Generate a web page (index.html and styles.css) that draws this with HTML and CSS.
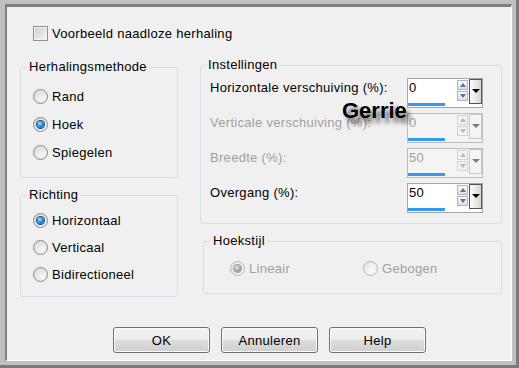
FILE: index.html
```html
<!DOCTYPE html>
<html lang="nl">
<head>
  <meta charset="UTF-8" />
  <title>Naadloze herhaling</title>
  <link rel="stylesheet" href="styles.css">
</head>
<body>
  <div class="frame">
    <div class="panel">
      <!-- Preview toggle -->
      <div class="check-row"><span class="checkbox"></span>Voorbeeld naadloze herhaling</div>

      <div class="main">
        <div class="col-left">
          <fieldset class="group group-method">
            <legend>Herhalingsmethode</legend>
            <div class="radio-row"><span class="radio"></span>Rand</div>
            <div class="radio-row"><span class="radio checked"></span>Hoek</div>
            <div class="radio-row"><span class="radio"></span>Spiegelen</div>
          </fieldset>
          <fieldset class="group group-dir">
            <legend>Richting</legend>
            <div class="radio-row"><span class="radio checked"></span>Horizontaal</div>
            <div class="radio-row"><span class="radio"></span>Verticaal</div>
            <div class="radio-row"><span class="radio"></span>Bidirectioneel</div>
          </fieldset>
        </div>

        <div class="col-right">
          <fieldset class="group group-settings">
            <legend>Instellingen</legend>
            <div class="field-row">
              <span class="field-label">Horizontale verschuiving (%):</span>
              <div class="spin">
                <div class="spin-value"><span>0</span><span class="spin-bar"></span></div>
                <div class="spin-arrows">
                  <span class="spin-btn"><span class="arrow-up"></span></span>
                  <span class="spin-btn"><span class="arrow-down"></span></span>
                </div>
                <span class="spin-drop"><span class="drop-arrow"></span></span>
              </div>
            </div>
            <div class="field-row disabled">
              <span class="field-label">Verticale verschuiving (%):</span>
              <div class="spin">
                <div class="spin-value"><span>0</span><span class="spin-bar"></span></div>
                <div class="spin-arrows">
                  <span class="spin-btn"><span class="arrow-up"></span></span>
                  <span class="spin-btn"><span class="arrow-down"></span></span>
                </div>
                <span class="spin-drop"><span class="drop-arrow"></span></span>
              </div>
            </div>
            <div class="field-row disabled">
              <span class="field-label">Breedte (%):</span>
              <div class="spin">
                <div class="spin-value"><span>50</span><span class="spin-bar"></span></div>
                <div class="spin-arrows">
                  <span class="spin-btn"><span class="arrow-up"></span></span>
                  <span class="spin-btn"><span class="arrow-down"></span></span>
                </div>
                <span class="spin-drop"><span class="drop-arrow"></span></span>
              </div>
            </div>
            <div class="field-row">
              <span class="field-label">Overgang (%):</span>
              <div class="spin">
                <div class="spin-value"><span>50</span><span class="spin-bar"></span></div>
                <div class="spin-arrows">
                  <span class="spin-btn"><span class="arrow-up"></span></span>
                  <span class="spin-btn"><span class="arrow-down"></span></span>
                </div>
                <span class="spin-drop"><span class="drop-arrow"></span></span>
              </div>
            </div>
          </fieldset>

          <fieldset class="group group-corner">
            <legend>Hoekstijl</legend>
            <div class="corner-options">
              <div class="radio-row disabled"><span class="radio checked"></span>Lineair</div>
              <div class="radio-row disabled"><span class="radio"></span>Gebogen</div>
            </div>
          </fieldset>
        </div>
      </div>

      <div class="buttons">
        <button class="btn">OK</button>
        <button class="btn">Annuleren</button>
        <button class="btn">Help</button>
      </div>
    </div>

    <!-- Watermark over the dialog -->
    <div class="watermark">Gerrie</div>
  </div>
</body>
</html>
```

FILE: styles.css
```css
body {
  margin: 0;
  font-family: "Liberation Sans", Arial, sans-serif;
  font-size: 13px;
  letter-spacing: 0.3px;
  color: #000;
  background: #bdbdbd;
}
/* Window frame */
.frame {
  position: relative;
  width: 519px;
  height: 368px;
  box-sizing: border-box;
  background: #c0c0c0;
  border-right: 3px solid #7a7a7a;
  border-bottom: 3px solid #7a7a7a;
  padding: 4px 4px 4px 5px;
}
.panel {
  height: 100%;
  box-sizing: border-box;
  background: #f0f0f0;
  border-top: 3px solid #808080;
  border-left: 2px solid #808080;
  border-right: 1px solid #fff;
  border-bottom: 1px solid #fff;
  padding: 18px 9px 7px 13px;
  display: flex;
  flex-direction: column;
}
.check-row {
  display: flex;
  align-items: center;
  height: 16px;
  margin-left: 13px;
}
.checkbox {
  width: 15px;
  height: 15px;
  box-sizing: border-box;
  border: 1px solid #8f8f8f;
  background: linear-gradient(135deg, #c9cdd3, #f6f6f6);
  box-shadow: inset 0 0 0 1px #f4f4f4;
  margin-right: 4px;
  flex: none;
}
.main {
  display: flex;
  margin-top: 16px;
}
.col-left {
  width: 158px;
  margin-top: 2px;
  display: flex;
  flex-direction: column;
}
.col-right {
  width: 302px;
  margin-left: 22px;
  display: flex;
  flex-direction: column;
}
/* Group boxes */
.group {
  margin: 0;
  border: 1px solid #d5dfe5;
  border-radius: 3px;
  min-inline-size: 0;
}
.group legend {
  padding: 0 2px;
  line-height: 16px;
}
.group-method {
  padding: 7px 6px 11px 6px;
}
.group-method .radio-row {
  height: 28px;
}
.group-dir {
  margin-top: 9px;
  padding: 4px 6px 8px 6px;
}
.group-settings {
  padding: 5px 18px 10px 5px;
}
.group-corner {
  margin-top: 9px;
  margin-left: 3px;
  padding: 6px 7px 11px 7px;
}
.radio-row {
  display: flex;
  align-items: center;
  height: 27px;
  padding-left: 6px;
}
.disabled {
  color: #a0a0a0;
}
.corner-options {
  display: grid;
  grid-template-columns: 133px 1fr;
  padding-left: 13px;
}
/* Radio buttons */
.radio {
  position: relative;
  width: 15px;
  height: 15px;
  box-sizing: border-box;
  border-radius: 50%;
  border: 1px solid #8a8a8a;
  background: radial-gradient(circle at 65% 70%, #f8f8f8 0, #e4e4e4 55%, #cfcfcf 100%);
  margin-right: 4px;
  flex: none;
}
.radio.checked::after {
  content: "";
  position: absolute;
  left: 3px;
  top: 3px;
  width: 7px;
  height: 7px;
  border-radius: 50%;
  background: radial-gradient(circle at 40% 35%, #a6e0ff 0, #2b8fd8 45%, #0b4a86 100%);
  box-shadow: 0 0 0 1px #24476e;
}
.disabled .radio {
  border-color: #b8b8b8;
  background: radial-gradient(circle at 65% 70%, #fafafa 0, #ececec 60%, #dedede 100%);
}
.disabled .radio.checked::after {
  background: radial-gradient(circle at 40% 35%, #e6e6e6 0, #a8a8a8 50%, #7c7c7c 100%);
  box-shadow: 0 0 0 1px #9c9c9c;
}
/* Numeric spin fields */
.field-row {
  display: flex;
  height: 30px;
  margin-bottom: 5px;
  padding-left: 4px;
}
.field-row:last-child {
  margin-bottom: 0;
}
.field-label {
  flex: 1;
  line-height: 16px;
  margin-top: 2px;
}
.spin {
  width: 76px;
  height: 30px;
  box-sizing: border-box;
  border: 1px solid #a5a5a5;
  background: #fff;
  display: flex;
}
.spin-value {
  flex: 1;
  display: flex;
  flex-direction: column;
  padding: 1px 0 0 1px;
  line-height: 16px;
}
.spin-bar {
  margin-top: auto;
  margin-left: -1px;
  margin-bottom: 1px;
  width: 37px;
  height: 3px;
  background: #3399f3;
}
.spin-arrows {
  width: 11px;
  margin-right: 1px;
  padding-top: 1px;
  display: flex;
  flex-direction: column;
  gap: 1px;
}
.spin-btn {
  height: 10px;
  box-sizing: border-box;
  border: 1px solid #b4b4b4;
  background: linear-gradient(#f8f8f8, #e0e0e0);
  display: flex;
  align-items: center;
  justify-content: center;
}
.arrow-up {
  width: 0;
  height: 0;
  border-left: 3px solid transparent;
  border-right: 3px solid transparent;
  border-bottom: 4px solid #5673b8;
}
.arrow-down {
  width: 0;
  height: 0;
  border-left: 3px solid transparent;
  border-right: 3px solid transparent;
  border-top: 4px solid #5673b8;
}
.spin-drop {
  width: 13px;
  height: 25px;
  box-sizing: border-box;
  border: 1px solid #555;
  background: linear-gradient(90deg, #fdfdfd, #d6d6d6);
  display: flex;
  justify-content: center;
  padding-top: 9px;
}
.drop-arrow {
  width: 0;
  height: 0;
  border-left: 4px solid transparent;
  border-right: 4px solid transparent;
  border-top: 4px solid #000;
}
.disabled .spin {
  background: #f4f4f4;
  border-color: #bdbdbd;
}
.disabled .spin-btn {
  border-color: #d2d2d2;
  background: #f2f2f2;
}
.disabled .arrow-up {
  border-bottom-color: #b8b8b8;
}
.disabled .arrow-down {
  border-top-color: #b8b8b8;
}
.disabled .spin-drop {
  border-color: #c8c8c8;
  background: #f4f4f4;
}
.disabled .drop-arrow {
  border-top-color: #7c7c7c;
}
/* Dialog buttons */
.buttons {
  display: flex;
  margin-top: auto;
  margin-left: 93px;
}
.btn {
  width: 97px;
  height: 26px;
  margin-right: 11px;
  padding: 0;
  border: 1px solid #707070;
  border-radius: 3px;
  background: linear-gradient(#f2f2f2 0%, #ebebeb 50%, #dddddd 51%, #cfcfcf 100%);
  box-shadow: inset 0 0 0 1px #fcfcfc;
  font: inherit;
  letter-spacing: 0.3px;
  color: #000;
}
.watermark {
  position: absolute;
  left: 342px;
  top: 100px;
  font: bold 22px/22px "Liberation Sans", Arial, sans-serif;
  letter-spacing: 0;
  color: #000;
  text-shadow: 4px 5px 4px rgba(0, 0, 0, 0.6);
}
```
